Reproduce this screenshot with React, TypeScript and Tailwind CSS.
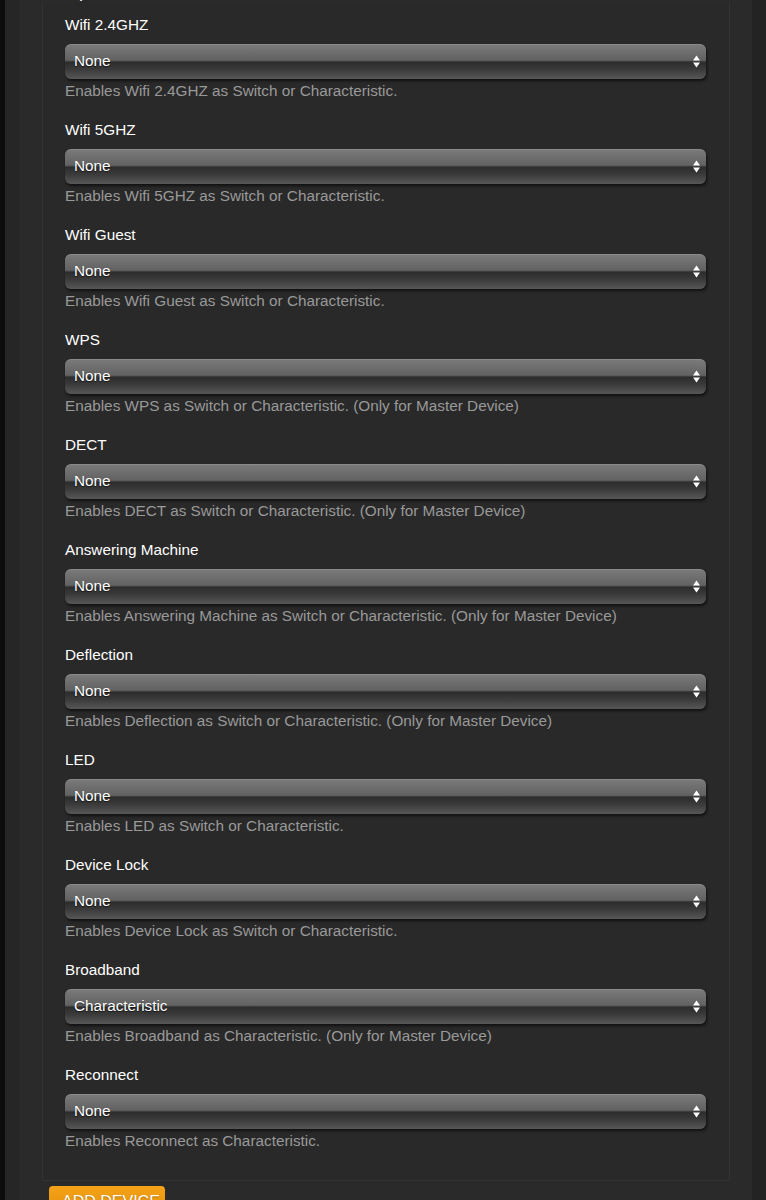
import React from 'react'

interface Option {
  label: string
  value: string
  help: string
}

const options: Option[] = [
  { label: 'Wifi 2.4GHZ', value: 'None', help: 'Enables Wifi 2.4GHZ as Switch or Characteristic.' },
  { label: 'Wifi 5GHZ', value: 'None', help: 'Enables Wifi 5GHZ as Switch or Characteristic.' },
  { label: 'Wifi Guest', value: 'None', help: 'Enables Wifi Guest as Switch or Characteristic.' },
  { label: 'WPS', value: 'None', help: 'Enables WPS as Switch or Characteristic. (Only for Master Device)' },
  { label: 'DECT', value: 'None', help: 'Enables DECT as Switch or Characteristic. (Only for Master Device)' },
  { label: 'Answering Machine', value: 'None', help: 'Enables Answering Machine as Switch or Characteristic. (Only for Master Device)' },
  { label: 'Deflection', value: 'None', help: 'Enables Deflection as Switch or Characteristic. (Only for Master Device)' },
  { label: 'LED', value: 'None', help: 'Enables LED as Switch or Characteristic.' },
  { label: 'Device Lock', value: 'None', help: 'Enables Device Lock as Switch or Characteristic.' },
  { label: 'Broadband', value: 'Characteristic', help: 'Enables Broadband as Characteristic. (Only for Master Device)' },
  { label: 'Reconnect', value: 'None', help: 'Enables Reconnect as Characteristic.' },
]

function SelectBox({ value }: { value: string }) {
  return (
    <div className="relative h-[35px] rounded-[6px] bg-[linear-gradient(to_bottom,#7b7b7b_0%,#626262_46%,#4f4f4f_49%,#2c2c2c_51%,#3a3a3a_72%,#575757_100%)] shadow-[1px_2px_3px_rgba(0,0,0,0.6),inset_0_1px_0_rgba(255,255,255,0.12)] flex items-center pl-[9px] pr-[5px]">
      <span className="text-[15.3px] text-white leading-none [text-shadow:0_1px_1px_rgba(0,0,0,0.6)] -mt-[2px]">{value}</span>
      <svg className="ml-auto" width="9" height="13" viewBox="0 0 9 13">
        <path d="M4.5 0.5 L8 5.5 H1 Z" fill="#fff" />
        <path d="M4.5 12.5 L8 7.5 H1 Z" fill="#fff" />
      </svg>
    </div>
  )
}

export default function App() {
  return (
    <div className="min-h-[1200px] h-[1200px] overflow-hidden bg-[#0c0c0c] flex font-['Liberation_Sans',Arial,sans-serif]">
      <div className="ml-[5px] w-[747px] bg-[#262626] pl-[15px] flex">
        <div className="flex-1 bg-[#2a2a2a] border-l border-[#2e2e2e] pl-[21px] pr-[22px]">
          <div className="h-[2px] overflow-hidden">
            <div className="text-[18px] leading-[22px] text-white -mt-[20px] pl-[23px]">Options</div>
          </div>
          <div className="border-x border-b border-[#323232] bg-[#292929] pl-[22px] pr-[23px] pb-[29px] pt-[13px]">
            {options.map((o) => (
              <div key={o.label} className="mb-[19px] last:mb-0">
                <div className="text-[15.3px] leading-[20px] text-white">{o.label}</div>
                <div className="mt-[9px]">
                  <SelectBox value={o.value} />
                </div>
                <div className="mt-[2px] text-[15.3px] leading-[20px] text-[#999999]">{o.help}</div>
              </div>
            ))}
          </div>
          <div className="pt-[5px] pl-[7px]">
            <button className="h-[36px] w-[116px] rounded-[4px] bg-[linear-gradient(to_bottom,#f5a31a,#e08a00)] text-white text-[16px] uppercase pt-[8px] leading-none text-left pl-[13px] flex items-start [text-shadow:0_1px_1px_rgba(0,0,0,0.25)]">
              Add Device
            </button>
          </div>
        </div>
      </div>
      <div className="flex-1 bg-[#232323]" />
    </div>
  )
}
